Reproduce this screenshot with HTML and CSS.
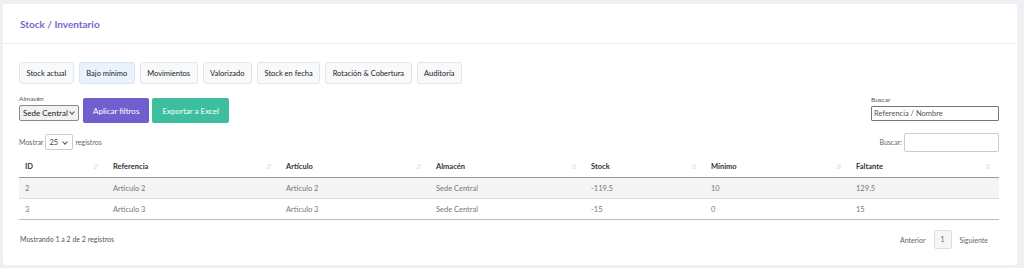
FILE: index.html
```html
<!DOCTYPE html>
<html lang="es">
<head>
    <meta charset="UTF-8">
    <title>Stock / Inventario</title>
    <link rel="stylesheet" href="styles.css">
</head>
<body>
    <div class="card">
        <div class="card-header">
            <h1>Stock / Inventario</h1>
        </div>
        <div class="card-body">
            <div class="tabs">
                <button class="tab">Stock actual</button>
                <button class="tab active">Bajo mínimo</button>
                <button class="tab">Movimientos</button>
                <button class="tab">Valorizado</button>
                <button class="tab">Stock en fecha</button>
                <button class="tab">Rotación &amp; Cobertura</button>
                <button class="tab">Auditoría</button>
            </div>

            <div class="filters">
                <div class="field">
                    <label>Almacén</label>
                    <span class="sel-wrap sel-main"><select class="sel"><option>Sede Central</option></select></span>
                </div>
                <button class="btn btn-primary">Aplicar filtros</button>
                <button class="btn btn-success">Exportar a Excel</button>
                <div class="field search-field">
                    <label>Buscar</label>
                    <input type="text" class="search-input" placeholder="Referencia / Nombre">
                </div>
            </div>

            <div class="dt-top">
                <div class="dt-length">Mostrar <span class="sel-wrap sel-len"><select class="len"><option>25</option></select></span> registros</div>
                <div class="dt-filter">Buscar: <input type="text" class="dt-search"></div>
            </div>

            <table class="dt">
                <thead>
                    <tr>
                        <th class="c1">ID</th>
                        <th class="c2">Referencia</th>
                        <th class="c3">Artículo</th>
                        <th class="c4">Almacén</th>
                        <th class="c5">Stock</th>
                        <th class="c6">Mínimo</th>
                        <th class="c7">Faltante</th>
                    </tr>
                </thead>
                <tbody>
                    <tr class="odd">
                        <td>2</td><td>Articulo 2</td><td>Articulo 2</td><td>Sede Central</td><td>-119.5</td><td>10</td><td>129.5</td>
                    </tr>
                    <tr>
                        <td>3</td><td>Articulo 3</td><td>Articulo 3</td><td>Sede Central</td><td>-15</td><td>0</td><td>15</td>
                    </tr>
                </tbody>
            </table>

            <div class="dt-bottom">
                <div class="dt-info">Mostrando 1 a 2 de 2 registros</div>
                <div class="dt-pages">
                    <span class="pg">Anterior</span>
                    <span class="pg current">1</span>
                    <span class="pg">Siguiente</span>
                </div>
            </div>
        </div>
    </div>
</body>
</html>
```

FILE: styles.css
```css
/* General */
body {
    margin: 0;
    padding: 4px 7px 0 3px;
    background-color: #eef0f4;
    font-family: 'Lato', 'Noto Sans', sans-serif;
    color: #333;
    height: 268px;
    box-sizing: border-box;
    overflow: hidden;
}

.card {
    background-color: #fff;
    border-radius: 3px;
    height: 261px;
}

.card-header {
    height: 39px;
    border-bottom: 1px solid #ebedf2;
    display: flex;
    align-items: center;
    padding-left: 17px;
}

h1 {
    margin: 0;
    font-size: 10px;
    font-weight: 700;
    color: #7468c8;
}

.card-body {
    padding: 18px 18px 0 16px;
}

/* Tabs */
.tabs {
    display: flex;
    gap: 5px;
}

.tab {
    height: 22px;
    padding: 0 6.5px;
    background-color: #f8f9fa;
    border: 1px solid #e3e5e8;
    border-radius: 3px;
    font-family: inherit;
    font-size: 7.5px;
    color: #222;
}

.tab.active {
    background-color: #eaf2fc;
    border-color: #d6e3f4;
}

/* Filters */
.filters {
    display: flex;
    align-items: flex-end;
    gap: 3px;
    margin-top: 11px;
}

.field {
    display: flex;
    flex-direction: column;
}

.field label {
    font-size: 6.5px;
    color: #555;
    margin-bottom: 3px;
}

.sel-wrap {
    position: relative;
    display: inline-block;
}

.sel-wrap::after {
    content: '';
    position: absolute;
    right: 5px;
    top: 5px;
    width: 3px;
    height: 3px;
    border-right: 1px solid #555;
    border-bottom: 1px solid #555;
    transform: rotate(45deg);
    pointer-events: none;
}

.sel-main {
    margin-bottom: 2px;
}

.sel {
    appearance: none;
    display: block;
    height: 16px;
    width: 60px;
    font-family: inherit;
    font-size: 8px;
    padding: 0 3px;
    border: 1px solid #8a8a8a;
    border-radius: 2px;
    background-color: #f2f2f2;
    color: #222;
}

.btn {
    height: 25px;
    border: none;
    border-radius: 2px;
    font-family: inherit;
    font-size: 8px;
    color: #fff;
    padding: 0 10px;
}

.btn-primary {
    background-color: #6f5fcf;
    margin-left: 1px;
}

.btn-success {
    background-color: #3dbf9f;
}

.search-field {
    margin-left: auto;
}

.search-input {
    width: 122px;
    height: 13px;
    border: 1px solid #767676;
    border-radius: 1px;
    font-family: inherit;
    font-size: 7.5px;
    padding: 0 2px;
    margin-bottom: 2px;
}

.search-input::placeholder {
    color: #555;
}

/* DataTable */
.dt-top {
    display: flex;
    justify-content: space-between;
    align-items: center;
    margin-top: 9px;
    font-size: 7px;
    color: #666;
}

.dt-length {
    display: flex;
    align-items: center;
    gap: 2px;
}

.sel-len::after {
    right: 6px;
    top: 6px;
}

.len {
    appearance: none;
    display: block;
    width: 28px;
    height: 16px;
    font-family: inherit;
    font-size: 7.5px;
    padding: 0 3px;
    border: 1px solid #ccc;
    border-radius: 2px;
    background-color: #fff;
    color: #444;
}

.dt-filter {
    display: flex;
    align-items: center;
    gap: 2px;
}

.dt-search {
    width: 89px;
    height: 15px;
    border: 1px solid #ccc;
    border-radius: 2px;
    margin-top: 1px;
}

.dt {
    width: 100%;
    border-collapse: collapse;
    margin-top: 4px;
    font-size: 7.5px;
}

.dt th {
    text-align: left;
    font-weight: 700;
    color: #333;
    height: 21px;
    padding: 0 6px;
    border-bottom: 1px solid #999;
    position: relative;
}

.dt th::after {
    content: '⇵';
    position: absolute;
    right: 8px;
    top: 6px;
    font-size: 7px;
    color: #ddd;
    font-weight: 400;
}

.c1 { width: 76px; }
.c2 { width: 161px; }
.c3 { width: 138px; }
.c4 { width: 143px; }
.c5 { width: 108px; }
.c6 { width: 133px; }

.dt td {
    height: 20px;
    padding: 0 6px;
    color: #777;
    border-bottom: 1px solid #ddd;
}

.dt tbody tr:last-child td {
    border-bottom-color: #bbb;
}

.dt tr.odd td {
    background-color: #f4f4f4;
}

.dt-bottom {
    display: flex;
    justify-content: space-between;
    align-items: center;
    margin-top: 10px;
    font-size: 7px;
    color: #555;
}

.dt-info {
    margin-left: 1px;
    margin-top: -2px;
}

.dt-pages {
    display: flex;
    align-items: center;
    margin-right: 3px;
}

.pg {
    padding: 0 8px;
    color: #666;
}

.pg.current {
    border: 1px solid #ddd;
    background-color: #f6f6f6;
    border-radius: 2px;
    height: 17px;
    line-height: 17px;
    padding: 0 6px;
}
```
